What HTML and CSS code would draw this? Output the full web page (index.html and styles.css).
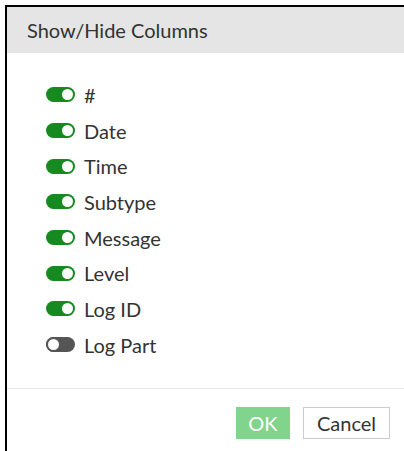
FILE: index.html
```html
<!DOCTYPE html>
<html lang="en">
<head>
<meta charset="utf-8">
<title>Show/Hide Columns</title>
<link rel="stylesheet" href="styles.css">
</head>
<body>
<div class="dialog">
  <div class="dialog-header">Show/Hide Columns</div>
  <ul class="column-list">
    <li class="column-row"><span class="toggle on"><span class="knob"></span></span><span class="label">#</span></li>
    <li class="column-row"><span class="toggle on"><span class="knob"></span></span><span class="label">Date</span></li>
    <li class="column-row"><span class="toggle on"><span class="knob"></span></span><span class="label">Time</span></li>
    <li class="column-row"><span class="toggle on"><span class="knob"></span></span><span class="label">Subtype</span></li>
    <li class="column-row"><span class="toggle on"><span class="knob"></span></span><span class="label">Message</span></li>
    <li class="column-row"><span class="toggle on"><span class="knob"></span></span><span class="label">Level</span></li>
    <li class="column-row"><span class="toggle on"><span class="knob"></span></span><span class="label">Log ID</span></li>
    <li class="column-row"><span class="toggle off"><span class="knob"></span></span><span class="label">Log Part</span></li>
  </ul>
  <div class="dialog-footer">
    <button class="btn btn-primary" type="button">OK</button>
    <button class="btn btn-default" type="button">Cancel</button>
  </div>
</div>
</body>
</html>
```

FILE: styles.css
```css
html, body {
  margin: 0;
  padding: 0;
  background: #fff;
}

body {
  font-family: Lato, "Open Sans", sans-serif;
  color: #333;
}

.dialog {
  margin: 5px 0 0 5px;
  height: 446px;
  border-top: 2px solid #000;
  border-left: 2px solid #000;
  display: flex;
  flex-direction: column;
  background: #fff;
}

.dialog-header {
  height: 46px;
  flex: none;
  display: flex;
  align-items: center;
  padding-left: 20px;
  background: #e5e5e5;
  font-size: 20px;
  color: #333;
}

.column-list {
  list-style: none;
  margin: 0;
  padding: 24px 0 0 39px;
  flex: none;
}

.column-row {
  height: 35.7px;
  display: flex;
  align-items: center;
  gap: 9px;
  font-size: 20px;
}

.toggle {
  box-sizing: border-box;
  width: 29px;
  height: 15px;
  border-radius: 8px;
  display: flex;
  align-items: center;
  padding: 0 2px;
  flex: none;
}

.toggle .knob {
  width: 11px;
  height: 11px;
  border-radius: 50%;
  background: #fff;
}

.toggle.on {
  background: #168a20;
  justify-content: flex-end;
}

.toggle.off {
  background: #555;
  justify-content: flex-start;
  padding: 0;
}

.toggle.off .knob {
  box-sizing: border-box;
  width: 15px;
  height: 15px;
  border: 2px solid #555;
}

.label {
  line-height: 1;
}

.dialog-footer {
  flex: 1;
  border-top: 1px solid #e5e5e5;
  margin-top: 25px;
  display: flex;
  justify-content: flex-end;
  align-items: flex-start;
  gap: 13px;
  padding: 18px 14px 0 0;
}

.btn {
  font-family: Lato, "Open Sans", sans-serif;
  font-size: 20px;
  height: 32px;
  padding: 0;
  border-radius: 0;
  cursor: pointer;
}

.btn-primary {
  background: #80d48c;
  border: 1px solid #80d48c;
  color: #fff;
  width: 54px;
}

.btn-default {
  background: #fff;
  border: 1px solid #ccc;
  color: #333;
  width: 87px;
}
```
